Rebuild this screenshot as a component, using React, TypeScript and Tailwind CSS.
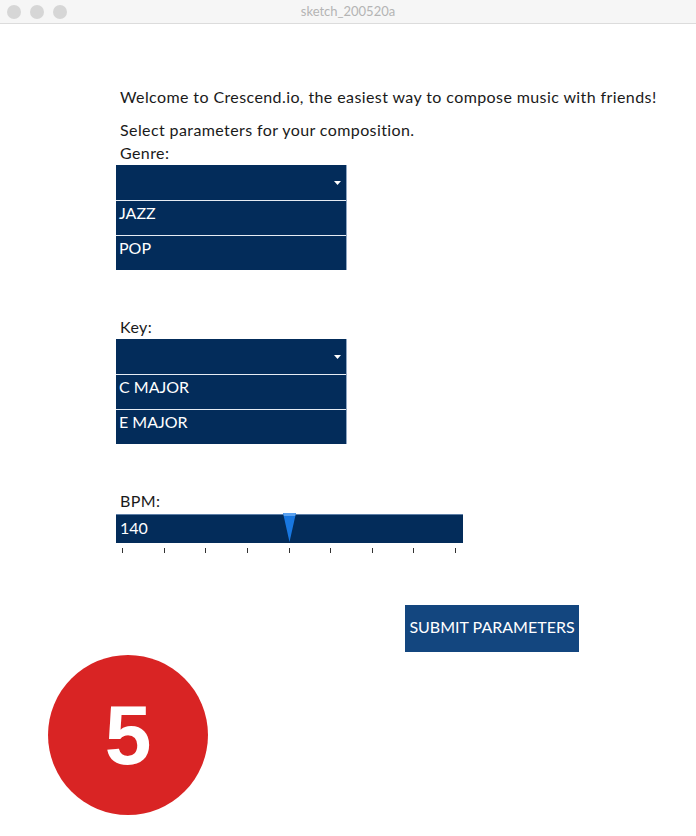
import React from "react";

const FONT = { fontFamily: "Lato, 'Open Sans', sans-serif" };

function Dropdown({ items }: { items: string[] }) {
  return (
    <div className="w-[231px] bg-[#032c5a] text-white text-[16px] leading-[20px] border-r border-[#8fa6c2]">
      <div className="h-[35px] flex items-center justify-end pr-[5px]">
        <svg width="7" height="4" viewBox="0 0 7 4">
          <path d="M0 0 L7 0 L3.5 4 Z" fill="#ffffff" />
        </svg>
      </div>
      {items.map((item) => (
        <div
          key={item}
          className="h-[35px] border-t border-[#e6ecf3] pl-[3px] pt-[2px]"
        >
          {item}
        </div>
      ))}
    </div>
  );
}

function BpmSlider() {
  const ticks = [0, 1, 2, 3, 4, 5, 6, 7, 8];
  return (
    <div className="w-[347px]">
      <div className="relative h-[29px] bg-[#032c5a] border-t border-[#5d7ea6] pl-[4px] pt-[3px] text-white text-[16px] leading-[20px]">
        140
        <svg
          className="absolute left-[167px] top-[-2px]"
          width="13"
          height="30"
          viewBox="0 0 13 30"
        >
          <path d="M0 0 L13 0 L6.5 29 Z" fill="#1877e0" />
          <path d="M0.2 0 L12.8 0 L12.1 3 L0.9 3 Z" fill="#5ba2f0" />
        </svg>
      </div>
      <div className="flex justify-between pl-[6px] pr-[7px] mt-[5px]">
        {ticks.map((t) => (
          <div key={t} className="w-px h-[5px] bg-[#333333]" />
        ))}
      </div>
    </div>
  );
}

export default function App() {
  return (
    <div
      className="w-[696px] h-[836px] bg-white flex flex-col overflow-hidden text-[#1a1a1a]"
      style={FONT}
    >
      {/* window title bar */}
      <div className="h-[24px] shrink-0 bg-[#f6f6f6] border-b border-[#dcdcdc] relative flex items-center justify-center">
        <div className="absolute left-[7px] top-[5px] flex gap-[9px]">
          <div className="w-[14px] h-[14px] rounded-full bg-[#d6d6d6]" />
          <div className="w-[14px] h-[14px] rounded-full bg-[#d6d6d6]" />
          <div className="w-[14px] h-[14px] rounded-full bg-[#d6d6d6]" />
        </div>
        <span className="text-[13px] text-[#b4b4b4]">sketch_200520a</span>
      </div>

      <div className="pl-[116px] pt-[63px] flex flex-col">
        <p className="pl-[4px] text-[16px] leading-[20px] tracking-[0.4px]">
          Welcome to Crescend.io, the easiest way to compose music with friends!
        </p>
        <p className="pl-[4px] mt-[13px] text-[16px] leading-[20px] tracking-[0.4px]">
          Select parameters for your composition.
        </p>
        <p className="pl-[4px] mt-[3px] text-[16px] leading-[20px] tracking-[0.4px]">
          Genre:
        </p>
        <div className="mt-[2px]">
          <Dropdown items={["JAZZ", "POP"]} />
        </div>

        <p className="pl-[4px] mt-[47px] text-[16px] leading-[20px] tracking-[0.4px]">
          Key:
        </p>
        <div className="mt-[2px]">
          <Dropdown items={["C MAJOR", "E MAJOR"]} />
        </div>

        <p className="pl-[4px] mt-[47px] text-[16px] leading-[20px] tracking-[0.4px]">
          BPM:
        </p>
        <div className="mt-[3px]">
          <BpmSlider />
        </div>

        <button className="ml-[289px] mt-[52px] w-[174px] h-[47px] bg-[#13467f] text-white text-[16px] leading-[20px] pb-[4px] flex items-center justify-center">
          SUBMIT PARAMETERS
        </button>
      </div>

      <div className="ml-[48px] mt-[3px] w-[160px] h-[160px] rounded-full bg-[#d92424] flex items-center justify-center">
        <span
          className="text-white text-[84px] font-bold leading-none"
          style={{ fontFamily: "'Liberation Sans', Arial, sans-serif" }}
        >
          5
        </span>
      </div>
    </div>
  );
}
